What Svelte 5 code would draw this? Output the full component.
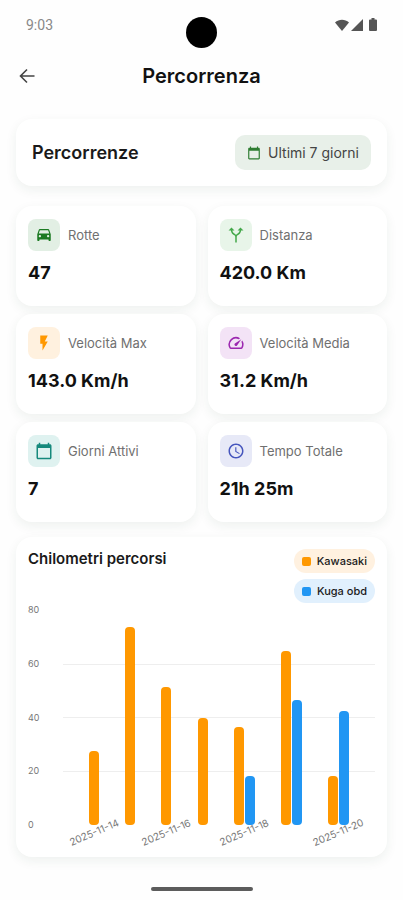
<script>
    const stats = [
        { icon: 'car', label: 'Rotte', value: '47', tone: 'green' },
        { icon: 'fork', label: 'Distanza', value: '420.0 Km', tone: 'lime' },
        { icon: 'bolt', label: 'Velocità Max', value: '143.0 Km/h', tone: 'orange' },
        { icon: 'speed', label: 'Velocità Media', value: '31.2 Km/h', tone: 'purple' },
        { icon: 'calendar', label: 'Giorni Attivi', value: '7', tone: 'teal' },
        { icon: 'clock', label: 'Tempo Totale', value: '21h 25m', tone: 'indigo' },
    ];

    const icons = {
        car: 'M18.92 5.01C18.72 4.42 18.16 4 17.5 4h-11c-.66 0-1.21.42-1.42 1.01L3 11v8c0 .55.45 1 1 1h1c.55 0 1-.45 1-1v-1h12v1c0 .55.45 1 1 1h1c.55 0 1-.45 1-1v-8l-2.08-5.99zM6.5 15c-.83 0-1.5-.67-1.5-1.5S5.67 12 6.5 12s1.5.67 1.5 1.5S7.33 15 6.5 15zm11 0c-.83 0-1.5-.67-1.5-1.5s.67-1.5 1.5-1.5 1.5.67 1.5 1.5-.67 1.5-1.5 1.5zM5 10l1.5-4.5h11L19 10H5z',
        fork: 'M6 2l4 4H7.1c.3 2.1 1.7 3.6 3.6 4.6.5.3.9.7 1.3 1.2.4-.5.8-.9 1.3-1.2 1.9-1 3.3-2.5 3.6-4.6H14l4-4 4 4h-3.1c-.3 3.1-2.2 5.1-4.6 6.4-.9.5-1.3 1.2-1.3 2.6v7h-2v-7c0-1.4-.4-2.1-1.3-2.6C7.3 11.1 5.4 9.1 5.1 6H2z',
        bolt: 'M7 2v11h3v9l7-12h-4l4-8z',
        speed: 'M20.38 8.57l-1.23 1.85a8 8 0 0 1-.22 7.58H5.07A8 8 0 0 1 15.58 6.85l1.85-1.23A10 10 0 0 0 3.35 19a2 2 0 0 0 1.72 1h13.85a2 2 0 0 0 1.74-1 10 10 0 0 0-.27-10.44zM10.59 15.41a2 2 0 0 0 2.83 0l5.66-8.49-8.49 5.66a2 2 0 0 0 0 2.83z',
        calendar: 'M20 3h-1V1h-2v2H7V1H5v2H4c-1.1 0-2 .9-2 2v16c0 1.1.9 2 2 2h16c1.1 0 2-.9 2-2V5c0-1.1-.9-2-2-2zm0 18H4V8h16v13z',
        clock: 'M11.99 2C6.47 2 2 6.48 2 12s4.47 10 9.99 10C17.52 22 22 17.52 22 12S17.52 2 11.99 2zM12 20c-4.42 0-8-3.58-8-8s3.58-8 8-8 8 3.58 8 8-3.58 8-8 8zm.5-13H11v6l5.25 3.15.75-1.23-4.5-2.67z',
    };

    const max = 80;
    const ticks = [80, 60, 40, 20, 0];

    const days = [
        { date: '2025-11-14', kawasaki: 27.6 },
        { date: '2025-11-15', kawasaki: 73.5 },
        { date: '2025-11-16', kawasaki: 51.3 },
        { date: '2025-11-17', kawasaki: 40 },
        { date: '2025-11-18', kawasaki: 36.5, kuga: 18.3 },
        { date: '2025-11-19', kawasaki: 64.8, kuga: 46.7 },
        { date: '2025-11-20', kawasaki: 18.3, kuga: 42.6 },
    ];
</script>

<div class="screen">
    <div class="status">
        <span class="time">9:03</span>
        <span class="camera"></span>
        <div class="signals">
            <svg width="14" height="12" viewBox="0 0 14 12"><path d="M7 12L0 3.5C4-.3 10-.3 14 3.5z" /></svg>
            <svg width="12" height="12" viewBox="0 0 12 12"><path d="M12 0v12H0z" /></svg>
            <svg class="battery" width="8" height="13" viewBox="0 0 8 13"><path d="M2.5 0h3v1.5H7a1 1 0 0 1 1 1V12a1 1 0 0 1-1 1H1a1 1 0 0 1-1-1V2.5a1 1 0 0 1 1-1h1.5z" /></svg>
        </div>
    </div>

    <header>
        <button class="back" aria-label="Indietro">
            <svg width="16" height="16" viewBox="0 0 16 16"><path d="M15.5 8H2M8 1.5L1.5 8 8 14.5" /></svg>
        </button>
        <h1>Percorrenza</h1>
    </header>

    <main>
        <section class="card period">
            <h2>Percorrenze</h2>
            <button class="range">
                <svg width="14" height="14" viewBox="0 0 24 24"><path d={icons.calendar} /></svg>
                Ultimi 7 giorni
            </button>
        </section>

        <section class="stats">
            {#each stats as stat}
                <article class="card stat">
                    <div class="stat-head">
                        <span class="badge {stat.tone}">
                            <svg width="18" height="18" viewBox="0 0 24 24"><path d={icons[stat.icon]} fill-rule="evenodd" /></svg>
                        </span>
                        <span class="label">{stat.label}</span>
                    </div>
                    <strong>{stat.value}</strong>
                </article>
            {/each}
        </section>

        <section class="card chart">
            <div class="chart-head">
                <h3>Chilometri percorsi</h3>
                <ul class="legend">
                    <li class="kawasaki">Kawasaki</li>
                    <li class="kuga">Kuga obd</li>
                </ul>
            </div>
            <div class="graph">
                <div class="axis">
                    {#each ticks as tick}
                        <span>{tick}</span>
                    {/each}
                </div>
                <div class="plot">
                    {#each days as day, i}
                        <div class="day">
                            <div class="bar kawasaki" style="height: {day.kawasaki / max * 100}%"></div>
                            {#if day.kuga}
                                <div class="bar kuga" style="height: {day.kuga / max * 100}%"></div>
                            {/if}
                            {#if i % 2 == 0}
                                <span class="date">{day.date}</span>
                            {/if}
                        </div>
                    {/each}
                </div>
            </div>
        </section>
    </main>

    <div class="home"></div>
</div>

<style>
    :global(body) {
        margin: 0;
        background: #fefefe;
    }

    .screen {
        display: flex;
        flex-direction: column;
        min-height: 100vh;
        box-sizing: border-box;
        color: #1a1a1a;
        font-family: Inter, Roboto, sans-serif;
    }

    h1, h2, h3 {
        margin: 0;
        font-weight: 600;
    }

    button {
        padding: 0;
        border: 0;
        background: none;
        color: inherit;
        font: inherit;
        cursor: pointer;
    }

    svg {
        display: block;
        fill: currentColor;
    }

    .status {
        display: grid;
        grid-template-columns: 1fr auto 1fr;
        align-items: start;
        height: 52px;
        padding: 17px 26px 0;
        box-sizing: border-box;
    }

    .time {
        color: #888;
        font-family: Roboto, sans-serif;
        font-size: 14px;
        line-height: 16px;
    }

    .camera {
        width: 31px;
        height: 31px;
        border-radius: 50%;
        background: #000;
    }

    .signals {
        display: flex;
        justify-content: flex-end;
        align-items: flex-end;
        gap: 2px;
        padding-top: 1px;
        color: #555;
    }

    .battery {
        margin-left: 4px;
    }

    header {
        display: grid;
        grid-template-columns: 24px 1fr 24px;
        align-items: center;
        height: 48px;
        padding: 0 16px;
    }

    .back {
        width: 24px;
        height: 24px;
        padding-left: 3px;
    }

    .back svg {
        fill: none;
        stroke: #444;
        stroke-width: 1.6;
    }

    h1 {
        color: #111;
        font-size: 20px;
        line-height: 24px;
        text-align: center;
    }

    main {
        display: flex;
        flex-direction: column;
        gap: 15px;
        padding: 19px 16px 0;
    }

    .card {
        border-radius: 16px;
        background: #fff;
        box-shadow: 0 4px 12px rgba(30, 70, 45, 0.07);
    }

    .period {
        display: flex;
        justify-content: space-between;
        align-items: center;
        margin-bottom: 5px;
        padding: 16px;
    }

    h2 {
        font-size: 18px;
        line-height: 24px;
    }

    .range {
        display: flex;
        align-items: center;
        gap: 7px;
        height: 35px;
        padding: 0 12px;
        border-radius: 10px;
        background: #e8f0e9;
        color: #444;
        font-size: 14px;
    }

    .range svg {
        color: #2e7d32;
    }

    .stats {
        display: grid;
        grid-template-columns: 1fr 1fr;
        gap: 8px 12px;
    }

    .stat {
        min-height: 75px;
        padding: 13px 12px 12px;
    }

    .stat-head {
        display: flex;
        align-items: center;
        gap: 8px;
        margin-bottom: 10px;
    }

    .badge {
        display: grid;
        place-items: center;
        width: 32px;
        height: 32px;
        border-radius: 8px;
    }

    .badge.green { background: #e2efe4; color: #1b7a22; }
    .badge.lime { background: #e8f5e9; color: #43a84a; }
    .badge.orange { background: #fff1df; color: #ff9800; }
    .badge.purple { background: #f3e3f6; color: #9c27b0; }
    .badge.teal { background: #dff2f0; color: #16897c; }
    .badge.indigo { background: #e7e9f7; color: #4656bd; }

    .label {
        color: #707070;
        font-size: 13px;
        line-height: 16px;
    }

    strong {
        display: block;
        color: #111;
        font-size: 18px;
        font-weight: 700;
        line-height: 24px;
    }

    .chart {
        padding: 12px 12px 32px;
    }

    .chart-head {
        display: flex;
        justify-content: space-between;
    }

    h3 {
        font-size: 15px;
        line-height: 20px;
    }

    .legend {
        display: flex;
        flex-direction: column;
        align-items: flex-end;
        gap: 6px;
        margin: 0;
        padding: 0;
        list-style: none;
    }

    .legend li {
        display: flex;
        align-items: center;
        gap: 6px;
        height: 24px;
        padding: 0 8px;
        border-radius: 12px;
        background: #fff1e0;
        font-size: 11px;
        font-weight: 500;
    }

    .legend li.kuga {
        background: #e1f0fd;
    }

    .legend li::before {
        width: 9px;
        height: 9px;
        border-radius: 2px;
        background: #ff9800;
        content: '';
    }

    .legend li.kuga::before {
        background: #2196f3;
    }

    .graph {
        display: flex;
        height: 215px;
        margin-top: 7px;
    }

    .axis {
        display: flex;
        flex-direction: column;
        justify-content: space-between;
        width: 35px;
        margin: -6px 0;
        color: #777;
        font-size: 9px;
        line-height: 12px;
    }

    .plot {
        display: flex;
        flex: 1;
        justify-content: space-evenly;
        background:
            linear-gradient(#eee, #eee) 0 25% / 100% 1px no-repeat,
            linear-gradient(#eee, #eee) 0 50% / 100% 1px no-repeat,
            linear-gradient(#eee, #eee) 0 75% / 100% 1px no-repeat;
    }

    .day {
        display: flex;
        position: relative;
        align-items: flex-end;
        gap: 1px;
    }

    .bar {
        width: 10px;
        border-radius: 4px;
        background: #ff9800;
    }

    .bar.kuga {
        background: #2196f3;
    }

    .date {
        position: absolute;
        top: 100%;
        left: 50%;
        color: #777;
        font-size: 10px;
        line-height: 14px;
        white-space: nowrap;
        transform: translateX(-50%) rotate(-23deg);
    }

    .home {
        width: 102px;
        height: 4px;
        margin: auto auto 9px;
        border-radius: 2px;
        background: #5c5c5c;
    }
</style>
